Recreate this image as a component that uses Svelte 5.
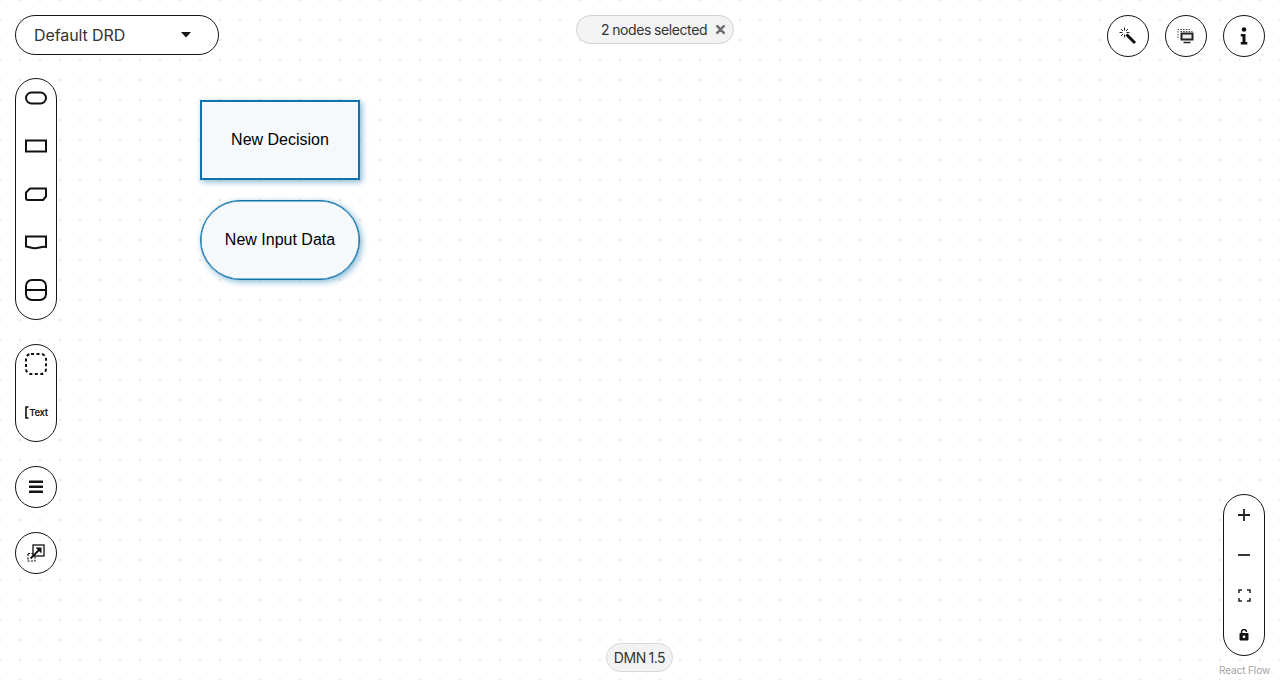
<script>
  let nodes = [
    { id: 'decision', label: 'New Decision', x: 200, y: 100, shape: 'rect' },
    { id: 'input', label: 'New Input Data', x: 200, y: 200, shape: 'pill' }
  ];
</script>

<div class="flow">
  <!-- nodes -->
  {#each nodes as n (n.id)}
    <div class="node {n.shape}" style="left: {n.x}px; top: {n.y}px">{n.label}</div>
  {/each}

  <!-- left side: drd selector and palettes -->
  <div class="left-panel">
    <button class="drd-select">
      <span>Default DRD</span>
      <svg width="10" height="6" viewBox="0 0 10 6"><path d="M0 0h10L5 5.500z" fill="#151515"/></svg>
    </button>

    <div class="palette">
      <div class="slot">
        <svg width="24" height="16" viewBox="0 0 24 16" fill="none" stroke="#111" stroke-width="2"><rect x="2" y="2.500" width="20" height="11" rx="5.500"/></svg>
      </div>
      <div class="slot">
        <svg width="24" height="16" viewBox="0 0 24 16" fill="none" stroke="#111" stroke-width="2"><rect x="2" y="2.500" width="20" height="11"/></svg>
      </div>
      <div class="slot">
        <svg width="24" height="16" viewBox="0 0 24 16" fill="none" stroke="#111" stroke-width="2"><path d="M6 2.500h16v8l-3 3.500H4a2 2 0 0 1-2-2V6.500z" stroke-linejoin="round"/></svg>
      </div>
      <div class="slot">
        <svg width="24" height="16" viewBox="0 0 24 16" fill="none" stroke="#111" stroke-width="2"><path d="M2 2.500h20v10.500c-4-1-7 1.200-11 1.200-3 0-6-1.200-9-1.700z"/></svg>
      </div>
      <div class="slot">
        <svg width="24" height="24" viewBox="0 0 24 24" fill="none" stroke="#111" stroke-width="2"><rect x="2" y="2" width="20" height="20" rx="6"/><path d="M2 12h20"/></svg>
      </div>
    </div>

    <div class="palette second">
      <div class="slot">
        <svg width="24" height="24" viewBox="0 0 24 24" fill="none" stroke="#111" stroke-width="2" stroke-dasharray="3 2.500"><rect x="2" y="2" width="20" height="20" rx="5"/></svg>
      </div>
      <div class="slot text-slot">
        <svg width="4" height="13" viewBox="0 0 4 13" fill="none" stroke="#111" stroke-width="1.600"><path d="M3.500 1H1v11h2.500"/></svg>
        <span>Text</span>
      </div>
    </div>

    <button class="round hamburger" aria-label="Outline">
      <svg width="14" height="14" viewBox="0 0 14 14" fill="#151515"><rect y="0.500" width="14" height="2.400" rx="0.500"/><rect y="5.500" width="14" height="2.400" rx="0.500"/><rect y="10.500" width="14" height="2.400" rx="0.500"/></svg>
    </button>

    <button class="round external" aria-label="External nodes">
      <svg width="18" height="18" viewBox="0 0 18 18" fill="none">
        <path d="M1 9.500h7v7.500H1z" stroke="#111" stroke-width="1.200" stroke-dasharray="2 1.300"/>
        <rect x="6" y="1" width="11" height="11" fill="#fff" stroke="#111" stroke-width="1.300"/>
        <path d="M3.500 14.500l8.500-8.500" stroke="#111" stroke-width="1.800"/>
        <path d="M8.500 3.500h6v6z" fill="#111"/>
      </svg>
    </button>
  </div>

  <!-- selection badge -->
  <div class="selected-pill">
    <span>2 nodes selected</span>
    <svg width="9" height="9" viewBox="0 0 9 9" stroke="#6a6e73" stroke-width="2.400" stroke-linecap="round"><path d="M1.200 1.200l6.600 6.600M7.800 1.200L1.200 7.800"/></svg>
  </div>

  <!-- top right actions -->
  <div class="top-actions">
    <button class="round" aria-label="Auto layout">
      <svg width="18" height="18" viewBox="0 0 18 18" fill="none" stroke="#111">
        <path d="M7.500 7.500l8.500 8.500" stroke-width="3"/>
        <path d="M5.500 0.500v3M5.500 7.500v3M0.500 5.500h3M7.500 5.500h3M2 2l2 2M9 2L7 4M2 9l2-2" stroke-width="0.900"/>
      </svg>
    </button>
    <button class="round" aria-label="Data types">
      <svg width="18" height="16" viewBox="0 0 18 16" fill="none">
        <path d="M1 10V1.500h13" stroke="#444" stroke-dasharray="1.500 1.200"/>
        <path d="M3.500 3.500h12" stroke="#444" stroke-dasharray="1.500 1.200"/>
        <rect x="3.500" y="4.500" width="13" height="8" fill="#222"/>
        <rect x="5.500" y="6.500" width="9" height="4" fill="#eee"/>
        <path d="M6.500 14.500h7" stroke="#222" stroke-width="1.500"/>
      </svg>
    </button>
    <button class="round" aria-label="Properties">
      <svg width="8" height="18" viewBox="0 0 8 18" fill="#111"><circle cx="4" cy="2.500" r="2.300"/><path d="M0.800 7h4.700v8h1.800v2.500H0.800V15h1.700V9.500H0.800z"/></svg>
    </button>
  </div>

  <!-- zoom controls -->
  <div class="controls">
    <button aria-label="Zoom in">
      <svg width="14" height="14" viewBox="0 0 14 14" stroke="#222" stroke-width="1.800"><path d="M7 1v12M1 7h12"/></svg>
    </button>
    <button aria-label="Zoom out">
      <svg width="14" height="14" viewBox="0 0 14 14" stroke="#222" stroke-width="1.800"><path d="M1 7h12"/></svg>
    </button>
    <button aria-label="Fit view">
      <svg width="13" height="13" viewBox="0 0 13 13" fill="none" stroke="#222" stroke-width="1.500"><path d="M1 4V1h3M9 1h3v3M12 9v3H9M4 12H1V9"/></svg>
    </button>
    <button aria-label="Lock">
      <svg width="10" height="12" viewBox="0 0 10 12"><path d="M2.500 5V3a2.500 2.500 0 0 1 5 0" fill="none" stroke="#111" stroke-width="1.400"/><rect x="0.500" y="4" width="9" height="7.500" rx="1" fill="#111"/><circle cx="5" cy="7.800" r="1.400" fill="#fff"/></svg>
    </button>
  </div>

  <div class="version">DMN 1.5</div>
  <div class="attribution">React Flow</div>
</div>

<style>
  :global(body) {
    margin: 0;
    background: #fff;
  }

  .flow {
    position: relative;
    width: 1280px;
    height: 680px;
    overflow: hidden;
    background-color: #fff;
    background-image: radial-gradient(circle at 1px 1px, #e8e8e8 1px, transparent 1.1px);
    background-size: 20px 20px;
    background-position: -1px -1px;
    font-family: Inter, "Open Sans", sans-serif;
    color: #151515;
  }

  button {
    padding: 0;
    font: inherit;
    color: inherit;
    cursor: pointer;
    display: flex;
    align-items: center;
    justify-content: center;
    background: #fff;
  }

  /* Nodes */
  .node {
    position: absolute;
    box-sizing: border-box;
    width: 160px;
    height: 80px;
    display: flex;
    align-items: center;
    justify-content: center;
    background: #f5f9fc;
    border: 2px solid #0f73ac;
    box-shadow: 2px 2px 6px rgba(15, 115, 172, 0.5);
    font-family: "Liberation Sans", Arial, sans-serif;
    font-size: 16px;
    color: #000;
  }

  .node.pill {
    border-radius: 40px;
    border-width: 1px;
    box-shadow: inset 0 0 0 0.5px #0f73ac, 2px 2px 6px rgba(15, 115, 172, 0.5);
  }

  /* Left column */
  .left-panel {
    position: absolute;
    left: 15px;
    top: 15px;
    display: flex;
    flex-direction: column;
    align-items: flex-start;
  }

  .drd-select {
    box-sizing: border-box;
    width: 204px;
    height: 40px;
    justify-content: space-between;
    padding: 0 27px 1px 18px;
    border: 1px solid #151515;
    border-radius: 20px;
    font-size: 16px;
    letter-spacing: -0.1px;
    color: #333;
    margin-bottom: 23px;
  }

  .palette {
    box-sizing: border-box;
    width: 42px;
    display: flex;
    flex-direction: column;
    border: 1px solid #151515;
    border-radius: 21px;
    background: #fff;
  }

  .palette.second {
    margin-top: 24px;
    margin-bottom: 24px;
  }

  .slot {
    height: 38px;
    margin-bottom: 10px;
    display: flex;
    align-items: center;
    justify-content: center;
  }

  .text-slot {
    gap: 0;
    padding-left: 1px;
  }

  .text-slot span {
    font-size: 9.500px;
    font-weight: 600;
    letter-spacing: -0.3px;
  }

  .round {
    box-sizing: border-box;
    width: 42px;
    height: 42px;
    border: 1px solid #151515;
    border-radius: 50%;
  }

  .hamburger {
    margin-bottom: 24px;
  }

  /* Top centre */
  .selected-pill {
    position: absolute;
    left: 576px;
    top: 15px;
    box-sizing: border-box;
    width: 158px;
    height: 29px;
    display: flex;
    align-items: center;
    gap: 9px;
    padding: 0 0 1px 24px;
    background: #f3f3f3;
    border: 1px solid #d2d2d2;
    border-radius: 15px;
    font-size: 14px;
    letter-spacing: -0.4px;
    word-spacing: -0.5px;
    color: #333;
  }

  /* Top right */
  .top-actions {
    position: absolute;
    right: 15px;
    top: 15px;
    display: flex;
    gap: 16px;
  }

  /* Zoom controls */
  .controls {
    position: absolute;
    right: 15px;
    top: 494px;
    box-sizing: border-box;
    width: 42px;
    height: 162px;
    display: flex;
    flex-direction: column;
    border: 1px solid #151515;
    border-radius: 21px;
    background: #fff;
  }

  .controls button {
    flex: 1;
    background: none;
    border: none;
  }

  /* Bottom */
  .version {
    position: absolute;
    left: 606px;
    top: 643px;
    box-sizing: border-box;
    width: 67px;
    height: 29px;
    display: flex;
    align-items: center;
    justify-content: center;
    padding-bottom: 1px;
    background: #f3f3f3;
    border: 1px solid #d8d8d8;
    border-radius: 15px;
    font-size: 14px;
    letter-spacing: -0.4px;
    word-spacing: -1px;
    color: #333;
  }

  .attribution {
    position: absolute;
    right: 10px;
    bottom: 4px;
    font-size: 10px;
    letter-spacing: -0.1px;
    color: #a3a3a3;
  }
</style>
